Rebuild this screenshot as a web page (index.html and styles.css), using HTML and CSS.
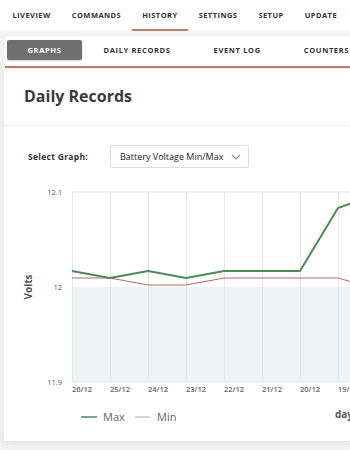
FILE: index.html
```html
<!DOCTYPE html>
<html lang="en">
<head>
  <meta charset="UTF-8">
  <meta name="viewport" content="width=device-width, initial-scale=1.0">
  <title>History - Daily Records</title>
  <link rel="stylesheet" href="styles.css">
</head>
<body>

  <nav class="topnav">
    <a>LIVEVIEW</a>
    <a>COMMANDS</a>
    <a class="active">HISTORY</a>
    <a>SETTINGS</a>
    <a>SETUP</a>
    <a>UPDATE</a>
  </nav>

  <div class="subnav">
    <a class="active">GRAPHS</a>
    <a>DAILY RECORDS</a>
    <a>EVENT LOG</a>
    <a>COUNTERS</a>
  </div>

  <main class="card">
    <header class="card-head">
      <h1>Daily Records</h1>
    </header>
    <section class="card-body">
      <div class="graph-select">
        <label>Select Graph:</label>
        <div class="select">
          <span>Battery Voltage Min/Max</span>
          <svg width="10" height="6" viewBox="0 0 10 6"><path d="M1 1 L5 5 L9 1" fill="none" stroke="#c3836d" stroke-width="1.2"/></svg>
        </div>
      </div>

      <!-- chart drawn in page coordinates via viewBox -->
      <svg class="chart" width="346" height="256" viewBox="4 180 346 256">
        <rect x="72" y="286" width="290" height="95" fill="#f0f1f5"/>
        <g stroke="#e6e7eb" stroke-width="1">
          <line x1="72" y1="191" x2="360" y2="191"/>
          <line x1="72" y1="381" x2="360" y2="381"/>
          <line x1="72.5" y1="191" x2="72.5" y2="381"/>
          <line x1="110.5" y1="191" x2="110.5" y2="381"/>
          <line x1="148.5" y1="191" x2="148.5" y2="381"/>
          <line x1="186.5" y1="191" x2="186.5" y2="381"/>
          <line x1="224.5" y1="191" x2="224.5" y2="381"/>
          <line x1="262.5" y1="191" x2="262.5" y2="381"/>
          <line x1="300.5" y1="191" x2="300.5" y2="381"/>
          <line x1="338.5" y1="191" x2="338.5" y2="381"/>
        </g>
        <g class="tick" text-anchor="end">
          <text x="62" y="194">12.1</text>
          <text x="62" y="289">12</text>
          <text x="62" y="384">11.9</text>
        </g>
        <polyline points="72,277 110,277 148,284 186,284 224,277 262,277 300,277 338,277 352,281" fill="none" stroke="#b26d5a" stroke-width="1"/>
        <polyline points="72,270 110,277 148,270 186,277 224,270 262,270 300,270 338,207 352,202" fill="none" stroke="#4b8a57" stroke-width="2"/>
        <g class="xtick">
          <text x="72" y="391">26/12</text>
          <text x="110" y="391">25/12</text>
          <text x="148" y="391">24/12</text>
          <text x="186" y="391">23/12</text>
          <text x="224" y="391">22/12</text>
          <text x="262" y="391">21/12</text>
          <text x="300" y="391">20/12</text>
          <text x="338" y="391">19/12</text>
        </g>
        <text class="axis-title" transform="translate(32 286) rotate(-90)" text-anchor="middle">Volts</text>
        <text class="axis-title" x="335" y="417">days</text>
        <line x1="81" y1="416" x2="97" y2="416" stroke="#4b8a57" stroke-width="1.5"/>
        <text class="legend" x="103" y="420">Max</text>
        <line x1="135" y1="416" x2="150" y2="416" stroke="#c99a8c" stroke-width="1"/>
        <text class="legend" x="157" y="420">Min</text>
      </svg>
    </section>
  </main>

</body>
</html>
```

FILE: styles.css
```css
html, body { margin: 0; height: 100%; overflow: hidden; }
body {
  background: #f3f3f3;
  font-family: "Open Sans", "Liberation Sans", sans-serif;
  color: #333;
}
a { cursor: pointer; white-space: nowrap; }

.topnav {
  display: flex;
  height: 32px;
  padding-left: 2px;
  background: #fff;
  border-bottom: 1px solid #f0f0f0;
  box-sizing: border-box;
}
.topnav a {
  display: flex;
  align-items: center;
  padding: 1px 10.5px 0;
  font-size: 7.5px;
  font-weight: 700;
  letter-spacing: 0.45px;
  color: #333;
  border-bottom: 2px solid transparent;
}
.topnav a.active { border-bottom-color: #b98168; }

.subnav {
  display: flex;
  align-items: center;
  margin: 4px 0 0 5px;
  padding: 4px 2px 6px;
  background: #fff;
  border-radius: 3px 0 0 0;
  border-bottom: 2px solid #b98168;
  box-shadow: 0 0 2px rgba(0,0,0,0.06);
}
.subnav a {
  display: flex;
  align-items: center;
  height: 20px;
  padding: 0 21.5px;
  font-size: 7.5px;
  font-weight: 700;
  letter-spacing: 0.65px;
  color: #333;
  border-radius: 2px;
}
.subnav a.active {
  background: #6f6f6f;
  color: #fff;
  padding: 0 20.5px;
  box-shadow: 0 1px 2px rgba(0,0,0,0.2);
}

.card {
  margin: 1px 0 0 4px;
  height: 372px;
  background: #fff;
  box-shadow: 0 2px 8px rgba(0,0,0,0.08);
}
.card-head {
  height: 57px;
  padding: 0 20px;
  border-bottom: 1px solid #ededed;
  box-sizing: border-box;
}
.card-head h1 {
  margin: 0;
  padding-top: 17px;
  font-size: 16px;
  line-height: 20px;
  font-weight: 700;
  color: #3a3a3a;
}

.graph-select {
  display: flex;
  align-items: center;
  padding: 19px 0 0 24px;
}
.graph-select label {
  width: 82px;
  font-size: 8.5px;
  font-weight: 700;
  letter-spacing: 0.3px;
  color: #333;
}
.select {
  display: flex;
  align-items: center;
  gap: 8px;
  height: 21px;
  padding: 0 7px 0 9px;
  border: 1px solid #dedede;
  border-radius: 2px;
  font-size: 9px;
  color: #222;
}

.chart { display: block; margin-top: 13px; }
.chart .tick { font-size: 7.5px; fill: #555; }
.chart .xtick { font-size: 7.5px; font-weight: 600; fill: #666; }
.chart .axis-title { font-size: 10px; font-weight: 700; fill: #555; }
.chart .legend { font-size: 11px; fill: #666; }
```
